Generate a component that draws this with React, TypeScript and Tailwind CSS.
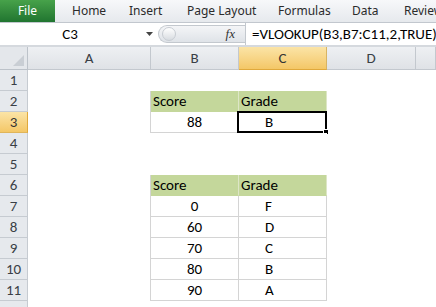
import React from 'react';

type Kind = 'none' | 'head' | 'data' | 'sel';
type Cell = { text?: string; kind: Kind; align?: 'left' | 'center' | 'grade' };

const tabs = [
  { label: 'Home', w: 'w-[57px]' },
  { label: 'Insert', w: 'w-[58px]' },
  { label: 'Page Layout', w: 'w-[91px]' },
  { label: 'Formulas', w: 'w-[74px]' },
  { label: 'Data', w: 'w-[52px]' },
  { label: 'Review', w: 'w-[60px]' },
];

const empty: Cell = { kind: 'none' };

const rows: { n: number; b: Cell; c: Cell }[] = [
  { n: 1, b: empty, c: empty },
  { n: 2, b: { text: 'Score', kind: 'head', align: 'left' }, c: { text: 'Grade', kind: 'head', align: 'left' } },
  { n: 3, b: { text: '88', kind: 'data', align: 'center' }, c: { text: 'B', kind: 'sel', align: 'grade' } },
  { n: 4, b: empty, c: empty },
  { n: 5, b: empty, c: empty },
  { n: 6, b: { text: 'Score', kind: 'head', align: 'left' }, c: { text: 'Grade', kind: 'head', align: 'left' } },
  { n: 7, b: { text: '0', kind: 'data', align: 'center' }, c: { text: 'F', kind: 'data', align: 'grade' } },
  { n: 8, b: { text: '60', kind: 'data', align: 'center' }, c: { text: 'D', kind: 'data', align: 'grade' } },
  { n: 9, b: { text: '70', kind: 'data', align: 'center' }, c: { text: 'C', kind: 'data', align: 'grade' } },
  { n: 10, b: { text: '80', kind: 'data', align: 'center' }, c: { text: 'B', kind: 'data', align: 'grade' } },
  { n: 11, b: { text: '90', kind: 'data', align: 'center' }, c: { text: 'A', kind: 'data', align: 'grade' } },
  { n: 12, b: empty, c: empty },
];

const cellFont = { fontFamily: 'Carlito, Lato, "Liberation Sans", sans-serif' };

const DataCell = ({ cell }: { cell: Cell }) => {
  const base = 'relative h-[21px] border-r border-b flex items-end pb-[1px] text-[15px] leading-[18px] text-black';
  let tone = 'border-white bg-white';
  if (cell.kind === 'head') tone = 'bg-[#c4d79b] border-r-[#dde6c6] border-b-[#c4d79b]';
  if (cell.kind === 'data' || cell.kind === 'sel') tone = 'bg-white border-[#d4d4d4]';
  let align = '';
  if (cell.align === 'left') align = 'pl-[2px]';
  if (cell.align === 'center') align = 'justify-center';
  if (cell.align === 'grade') align = 'pl-[26px]';
  return (
    <div className={`${base} ${tone} ${align}`}>
      {cell.text}
      {cell.kind === 'sel' && (
        <div className="absolute -left-[2px] -top-[1px] w-[90px] h-[22px] border-2 border-black">
          <div className="absolute -right-[4px] -bottom-[4px] w-[6px] h-[6px] bg-black border border-white" />
        </div>
      )}
    </div>
  );
};

export default function App() {
  return (
    <div className="w-[436px] h-[307px] overflow-hidden bg-white select-none">
      {/* ribbon tabs */}
      <div
        className="h-[23px] flex items-stretch overflow-hidden bg-gradient-to-b from-[#f7f8fa] to-[#e6e9ed] border-b border-[#c2c7ce] text-[12px] text-[#2b2b2b]"
        style={{ fontFamily: '"Noto Sans", "Open Sans", sans-serif' }}
      >
        <div className="w-[55px] shrink-0 flex items-center justify-center text-white bg-gradient-to-b from-[#47a24a] to-[#207530]">
          File
        </div>
        <div className="w-[17px] shrink-0" />
        {tabs.map(t => (
          <div key={t.label} className={`${t.w} flex items-center shrink-0 whitespace-nowrap`}>
            {t.label}
          </div>
        ))}
      </div>

      {/* formula bar */}
      <div className="h-[24px] flex items-stretch bg-white border-b-2 border-[#d5d9de]">
        <div
          className="w-[140px] shrink-0 flex items-center justify-center text-[15px] text-black"
          style={cellFont}
        >
          C3
        </div>
        <div className="w-[18px] shrink-0 flex items-center justify-center">
          <svg width="7" height="4" viewBox="0 0 7 4">
            <path d="M0 0 L7 0 L3.5 4 Z" fill="#444" />
          </svg>
        </div>
        <div className="my-[2px] w-[87px] shrink-0 flex items-center justify-between rounded-l-full bg-gradient-to-b from-[#f4f5f7] to-[#dfe3e8] border border-[#c3c8ce] border-r-0 pr-[10px]">
          <div className="ml-[3px] w-[14px] h-[14px] rounded-full bg-gradient-to-b from-[#ffffff] to-[#d8dce1] border border-[#c7ccd2]" />
          <span
            className="italic text-[13px] text-[#333]"
            style={{ fontFamily: '"Liberation Serif", "DejaVu Serif", serif' }}
          >
            fx
          </span>
        </div>
        <div
          className="flex-1 min-w-0 flex items-center pl-[6px] border-l border-[#c3c8ce] text-[15px] text-black whitespace-nowrap overflow-hidden"
          style={cellFont}
        >
          =VLOOKUP(B3,B7:C11,2,TRUE)
        </div>
      </div>

      {/* sheet */}
      <div className="grid grid-cols-[28px_123px_88px_88px_89px_1fr]" style={cellFont}>
        {/* column header */}
        <div className="relative h-[23px] bg-[#e4e7eb] border-r border-b border-[#bcc2c9]">
          <svg className="absolute right-[3px] bottom-[3px]" width="11" height="11" viewBox="0 0 11 11">
            <path d="M11 0 L11 11 L0 11 Z" fill="#c9ced4" />
          </svg>
        </div>
        {['A', 'B', 'C', 'D', ''].map(l => (
          <div
            key={l || 'E'}
            className={`h-[23px] flex items-center justify-center text-[15px] border-r border-b ${
              l === 'C'
                ? 'bg-gradient-to-b from-[#fbe4a6] to-[#f4c766] border-r-[#d8b463] border-b-[#e0a93c] text-[#333]'
                : 'bg-gradient-to-b from-[#eef0f3] to-[#dfe2e6] border-[#c3c8ce] text-[#3a3f46]'
            }`}
          >
            {l}
          </div>
        ))}

        {rows.map(r => {
          const hasData = r.b.kind === 'data';
          return (
            <React.Fragment key={r.n}>
              <div
                className={`h-[21px] flex items-end justify-center pb-[1px] leading-[18px] text-[15px] border-r border-b ${
                  r.n === 3
                    ? 'bg-gradient-to-b from-[#fbe4a6] to-[#f4c766] border-b-[#e0b55a] border-r-[#e0a93c] text-[#333]'
                    : 'bg-[#e6e9ed] border-[#c6cbd1] text-[#3a3f46]'
                }`}
              >
                {r.n < 12 ? r.n : ''}
              </div>
              <div className={`h-[21px] bg-white border-r ${hasData || r.b.kind === 'head' ? 'border-[#d4d4d4]' : 'border-white'}`} />
              <DataCell cell={r.b} />
              <DataCell cell={r.c} />
              <div className="h-[21px] bg-white" />
              <div className="h-[21px] bg-white" />
            </React.Fragment>
          );
        })}
      </div>
    </div>
  );
}
